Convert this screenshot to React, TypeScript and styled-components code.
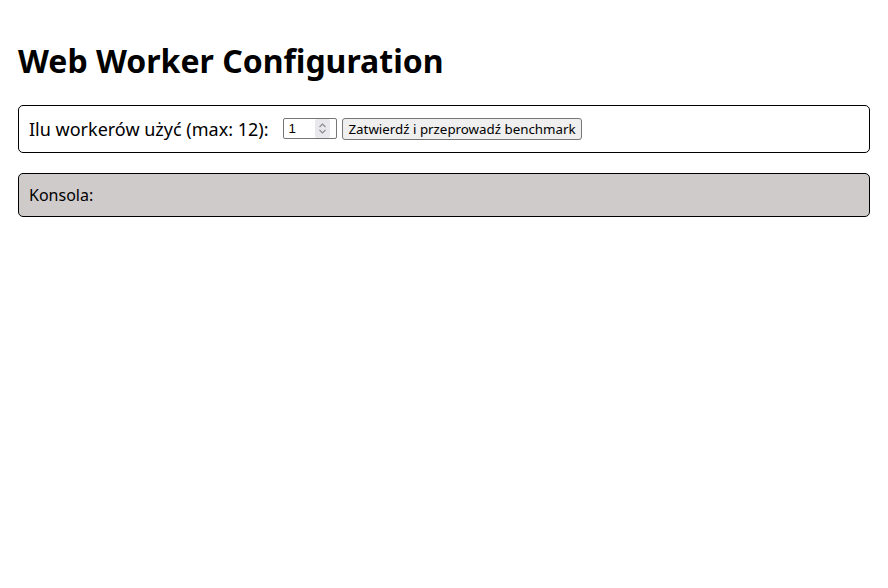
import React from 'react';
import styled, { createGlobalStyle } from 'styled-components';

const GlobalStyle = createGlobalStyle`
  body {
    margin: 8px;
    font-family: "Noto Sans", "Open Sans", sans-serif;
    color: #000;
    background: #fff;
  }
`;

const Page = styled.div`
  padding: 10px;
  display: flex;
  flex-direction: column;
  gap: 20px;
`;

const Title = styled.h1`
  font-size: 32px;
  font-weight: 700;
  margin: 21px 0 2px;
  line-height: 1.362;
`;

const Panel = styled.div<{ shaded?: boolean }>`
  border: 1px solid #000;
  border-radius: 5px;
  padding: 10px;
  background: ${props => (props.shaded ? '#cfcbcb' : '#fff')};
  display: flex;
  align-items: center;
  font-size: 16px;
`;

const Label = styled.label`
  font-size: 18px;
  line-height: 26px;
  margin-right: 15px;
`;

const InputWrap = styled.div`
  position: relative;
  display: flex;
  margin-right: 5px;
`;

const NumberInput = styled.input`
  width: 54px;
  height: 21px;
  box-sizing: border-box;
  font-family: "Liberation Sans", Arial, sans-serif;
  font-size: 13.33px;
  padding: 1px 2px 1px 4px;
  border: 1px solid #767676;
  border-radius: 2px;
  -moz-appearance: textfield;

  &::-webkit-inner-spin-button,
  &::-webkit-outer-spin-button {
    -webkit-appearance: none;
    margin: 0;
  }
`;

// stands in for the hovered spin button of the number field
const Spinner = styled.div`
  position: absolute;
  top: 1px;
  bottom: 1px;
  right: 7px;
  width: 15px;
  background: #e9e9ed;
  border-radius: 2px;
  display: flex;
  align-items: center;
  justify-content: center;
  pointer-events: none;
`;

const Button = styled.button`
  font-family: inherit;
  font-size: 13.33px;
  height: 22px;
  padding: 1px 5px;
  border: 1px solid #767676;
  border-radius: 3px;
  background: #efefef;
  color: #000;
`;

const App: React.FC = () => {
  return (
    <Page>
      <GlobalStyle />
      <Title>Web Worker Configuration</Title>
      <Panel>
        <Label htmlFor="workers">Ilu workerów użyć (max: 12):</Label>
        <InputWrap>
          <NumberInput id="workers" type="number" min={1} max={12} defaultValue={1} />
          <Spinner>
            <svg width="9" height="13" viewBox="0 0 9 13" fill="none" stroke="#8a8a8a" strokeWidth="1.1">
              <path d="M1.5 5 L4.5 2 L7.5 5" />
              <path d="M1.5 8 L4.5 11 L7.5 8" />
            </svg>
          </Spinner>
        </InputWrap>
        <Button>Zatwierdź i przeprowadź benchmark</Button>
      </Panel>
      <Panel shaded>Konsola:</Panel>
    </Page>
  );
};

export default App;
